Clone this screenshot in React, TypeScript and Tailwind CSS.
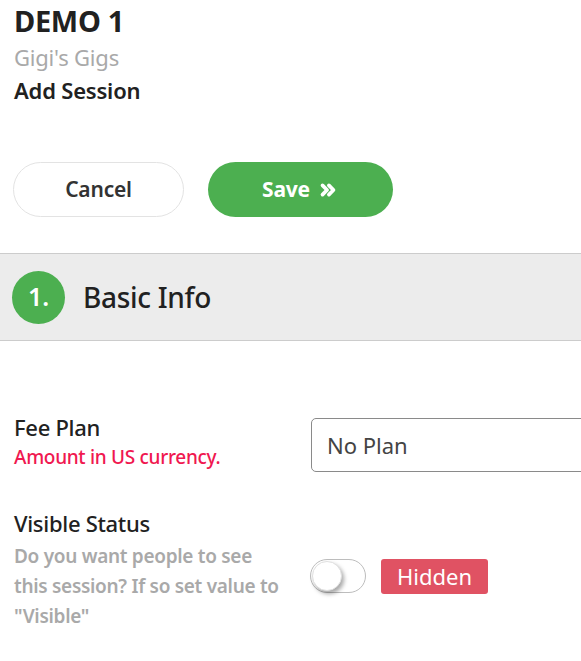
import React, { useState } from 'react'
import { ChevronsRight } from 'lucide-react'

const App = () => {
  const [visible, setVisible] = useState(false)

  return (
    <div className="w-[581px] h-[661px] overflow-hidden bg-white text-[#212121]" style={{ fontFamily: '"Noto Sans", "Open Sans", sans-serif' }}>
      {/* Header */}
      <div className="px-[14px] pt-[2px]">
        <h1 className="text-[29px] font-bold leading-[38px] tracking-[-0.3px]">DEMO 1</h1>
        <p className="text-[22px] leading-[34px] text-[#a9a9a9] tracking-[-0.2px]">Gigi's Gigs</p>
        <p className="text-[22px] leading-[32px] font-semibold tracking-[-0.2px]">Add Session</p>
      </div>

      {/* Actions */}
      <div className="flex gap-[24px] px-[13px] mt-[56px]">
        <button className="w-[171px] h-[55px] rounded-full border border-[#e3e3e3] bg-white text-[21px] font-semibold text-[#333] tracking-[-0.2px]">
          Cancel
        </button>
        <button className="w-[185px] h-[55px] rounded-full bg-[#4caf50] text-white text-[21px] font-bold flex items-center justify-center gap-[7px] tracking-[-0.2px]">
          Save
          <ChevronsRight className="w-[22px] h-[22px]" strokeWidth={4} />
        </button>
      </div>

      {/* Section header */}
      <div className="mt-[36px] h-[88px] bg-[#ececec] border-y border-[#cccccc] flex items-center px-[12px] gap-[18px]">
        <div className="w-[53px] h-[53px] rounded-full bg-[#4caf50] flex items-center justify-center text-white text-[25px] font-semibold pb-[1px]">
          1.
        </div>
        <h2 className="text-[28px] font-medium tracking-[-0.3px]">Basic Info</h2>
      </div>

      {/* Fields */}
      <div className="mt-[72px] grid grid-cols-[297px_1fr] gap-y-[36px]">
        <div className="pl-[14px]">
          <p className="text-[22px] leading-[28px] font-medium tracking-[-0.3px]">Fee Plan</p>
          <p className="text-[19px] leading-[32px] font-medium text-[#f01850] tracking-[-0.3px]">Amount in US currency.</p>
        </div>
        <div className="pl-[14px] pt-[5px]">
          <div className="w-[300px] h-[54px] border border-[#8a8a8a] rounded-[5px] flex items-center px-[15px] text-[22px] text-[#444]">
            No Plan
          </div>
        </div>

        <div className="pl-[14px] pr-[8px]">
          <p className="text-[22px] leading-[28px] font-medium tracking-[-0.3px]">Visible Status</p>
          <p className="mt-[4px] text-[19px] leading-[30px] font-semibold text-[#a9a9a9] tracking-[-0.3px]">
            Do you want people to see this session? If so set value to "Visible"
          </p>
        </div>
        <div className="pl-[13px] pt-[50px] flex items-start gap-[15px]">
          <button
            onClick={() => setVisible(!visible)}
            className={`w-[56px] h-[34px] rounded-full border border-[#bdbdbd] flex items-center px-[1px] ${visible ? 'bg-[#4caf50] justify-end' : 'bg-white justify-start'}`}
          >
            <span className="w-[30px] h-[30px] rounded-full bg-white shadow-[2px_3px_4px_rgba(0,0,0,0.35)] border border-[#e0e0e0]" />
          </button>
          <span className={`h-[35px] px-[16px] rounded-[3px] flex items-center text-white text-[22px] ${visible ? 'bg-[#4caf50]' : 'bg-[#e05263]'}`}>
            {visible ? 'Visible' : 'Hidden'}
          </span>
        </div>
      </div>
    </div>
  )
}

export default App
